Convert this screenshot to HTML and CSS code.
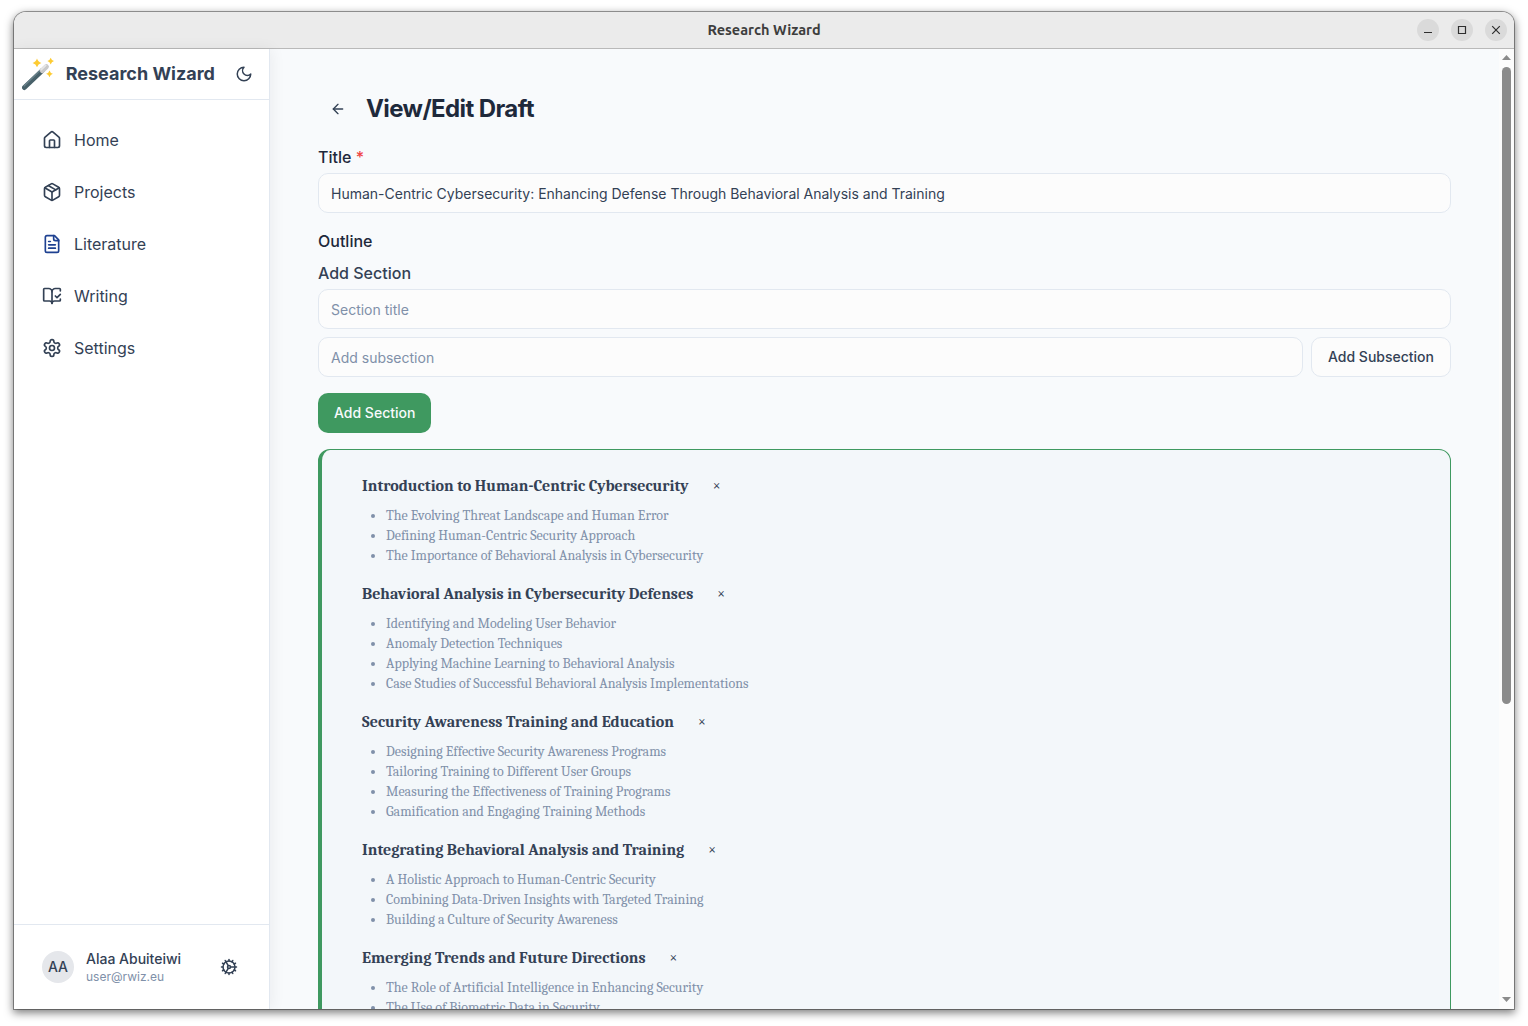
FILE: index.html
```html
<!DOCTYPE html>
<html lang="en">
<head>
<meta charset="utf-8">
<title>Research Wizard</title>
<link rel="stylesheet" href="styles.css">
</head>
<body>
<div class="window">
  <header class="titlebar">
    <span class="titlebar-name">Research Wizard</span>
    <div class="controls">
      <span class="control"><svg width="22" height="22" viewBox="0 0 22 22"><path d="M7 13.500h8"/></svg></span>
      <span class="control"><svg width="22" height="22" viewBox="0 0 22 22"><path d="M7.500 7.500h7v7h-7z"/></svg></span>
      <span class="control"><svg width="22" height="22" viewBox="0 0 22 22"><path d="M7.200 7.200l7.600 7.600M14.800 7.200l-7.600 7.600"/></svg></span>
    </div>
  </header>
  <div class="app">
    <aside class="sidebar">
      <div class="brand">
        <svg class="wand" width="34" height="34" viewBox="0 0 34 34">
          <path d="M2.400 30.600L20.600 13.200" stroke="#48616a" stroke-width="4.800" stroke-linecap="round"/>
          <path d="M1.800 29.200L19 12.600" stroke="#6b838c" stroke-width="1.200"/>
          <path d="M20.200 13.600L24.400 9.600" stroke="#c9c9c9" stroke-width="5" stroke-linecap="round"/>
          <path d="M19.200 12.600L23.600 8.400" stroke="#e6e6e6" stroke-width="2" stroke-linecap="round"/>
          <g fill="#fdcb32" transform="translate(0 .7)">
            <path d="M15 .8q1 3.500 4.400 4.400q-3.400 1-4.400 4.400q-1-3.400-4.400-4.400q3.400-.9 4.400-4.400z"/>
            <path d="M28.700 0q.8 2.700 3.300 3.400q-2.500.8-3.300 3.400q-.8-2.600-3.300-3.400q2.500-.7 3.300-3.400z"/>
            <path d="M27.500 12.700q.8 2.700 3.400 3.400q-2.600.8-3.400 3.400q-.8-2.600-3.400-3.400q2.600-.7 3.400-3.400z"/>
          </g>
        </svg>
        <span class="brand-name">Research Wizard</span>
        <svg class="icon moon" width="18" height="18" viewBox="0 0 24 24"><path d="M12 3a6 6 0 0 0 9 9 9 9 0 1 1-9-9Z"/></svg>
      </div>
      <nav class="nav">
        <a class="nav-item"><svg class="icon" width="20" height="20" viewBox="0 0 24 24"><path d="M15 21v-8a1 1 0 0 0-1-1h-4a1 1 0 0 0-1 1v8"/><path d="M3 10a2 2 0 0 1 .709-1.528l7-5.999a2 2 0 0 1 2.582 0l7 5.999A2 2 0 0 1 21 10v9a2 2 0 0 1-2 2H5a2 2 0 0 1-2-2z"/></svg>Home</a>
        <a class="nav-item"><svg class="icon" width="20" height="20" viewBox="0 0 24 24"><path d="m7.500 4.270 9 5.150"/><path d="M21 8a2 2 0 0 0-1-1.730l-7-4a2 2 0 0 0-2 0l-7 4A2 2 0 0 0 3 8v8a2 2 0 0 0 1 1.730l7 4a2 2 0 0 0 2 0l7-4A2 2 0 0 0 21 16Z"/><path d="m3.300 7 8.700 5 8.700-5"/><path d="M12 22V12"/></svg>Projects</a>
        <a class="nav-item"><svg class="icon blue" width="20" height="20" viewBox="0 0 24 24"><path d="M15 2H6a2 2 0 0 0-2 2v16a2 2 0 0 0 2 2h12a2 2 0 0 0 2-2V7Z"/><path d="M14 2v4a2 2 0 0 0 2 2h4"/><path d="M10 9H8"/><path d="M16 13H8"/><path d="M16 17H8"/></svg>Literature</a>
        <a class="nav-item"><svg class="icon" width="20" height="20" viewBox="0 0 24 24"><path d="M12 21V7"/><path d="m16 12 2 2 4-4"/><path d="M22 6V4a1 1 0 0 0-1-1h-5a4 4 0 0 0-4 4 4 4 0 0 0-4-4H3a1 1 0 0 0-1 1v13a1 1 0 0 0 1 1h6a3 3 0 0 1 3 3 3 3 0 0 1 3-3h6a1 1 0 0 0 1-1v-1.300"/></svg>Writing</a>
        <a class="nav-item"><svg class="icon" width="20" height="20" viewBox="0 0 24 24"><path d="M12.220 2h-.44a2 2 0 0 0-2 2v.18a2 2 0 0 1-1 1.730l-.43.25a2 2 0 0 1-2 0l-.15-.08a2 2 0 0 0-2.730.73l-.22.38a2 2 0 0 0 .73 2.730l.15.1a2 2 0 0 1 1 1.720v.51a2 2 0 0 1-1 1.740l-.15.09a2 2 0 0 0-.73 2.730l.22.38a2 2 0 0 0 2.730.73l.15-.08a2 2 0 0 1 2 0l.43.25a2 2 0 0 1 1 1.730V20a2 2 0 0 0 2 2h.44a2 2 0 0 0 2-2v-.18a2 2 0 0 1 1-1.730l.43-.25a2 2 0 0 1 2 0l.15.08a2 2 0 0 0 2.730-.73l.22-.39a2 2 0 0 0-.73-2.730l-.15-.08a2 2 0 0 1-1-1.740v-.5a2 2 0 0 1 1-1.740l.15-.09a2 2 0 0 0 .73-2.730l-.22-.38a2 2 0 0 0-2.730-.73l-.15.08a2 2 0 0 1-2 0l-.43-.25a2 2 0 0 1-1-1.730V4a2 2 0 0 0-2-2z"/><circle cx="12" cy="12" r="3"/></svg>Settings</a>
      </nav>
      <div class="account">
        <span class="avatar">AA</span>
        <div class="who"><span class="who-name">Alaa Abuiteiwi</span><span class="who-mail">user@rwiz.eu</span></div>
        <svg class="icon cog" width="18" height="18" viewBox="0 0 24 24"><path d="M12 20a8 8 0 1 0 0-16 8 8 0 0 0 0 16Z"/><path d="M12 14a2 2 0 1 0 0-4 2 2 0 0 0 0 4Z"/><path d="M12 2v2"/><path d="M12 22v-2"/><path d="m17 20.660-1-1.730"/><path d="M11 10.270 7 3.340"/><path d="m20.660 17-1.730-1"/><path d="m3.340 7 1.730 1"/><path d="M14 12h8"/><path d="M2 12h2"/><path d="m20.660 7-1.730 1"/><path d="m3.340 17 1.730-1"/><path d="m17 3.340-1 1.730"/><path d="m11 13.730-4 6.930"/></svg>
      </div>
    </aside>
    <main class="main">
      <div class="page-head">
        <svg class="icon" width="16" height="16" viewBox="0 0 24 24"><path d="m12 19-7-7 7-7"/><path d="M19 12H5"/></svg>
        <h1 class="page-title">View/Edit Draft</h1>
      </div>
      <div class="label strong">Title <span class="required">*</span></div>
      <div class="input filled">Human-Centric Cybersecurity: Enhancing Defense Through Behavioral Analysis and Training</div>
      <div class="label strong outline-label">Outline</div>
      <div class="label section-label">Add Section</div>
      <div class="input">Section title</div>
      <div class="sub-row">
        <div class="input grow">Add subsection</div>
        <button class="button">Add Subsection</button>
      </div>
      <button class="button primary">Add Section</button>
      <div class="outline">
        <section class="part">
          <h2 class="part-title">Introduction to Human-Centric Cybersecurity <span class="remove">×</span></h2>
          <ul class="topics"><li>The Evolving Threat Landscape and Human Error</li><li>Defining Human-Centric Security Approach</li><li>The Importance of Behavioral Analysis in Cybersecurity</li></ul>
        </section>
        <section class="part">
          <h2 class="part-title">Behavioral Analysis in Cybersecurity Defenses <span class="remove">×</span></h2>
          <ul class="topics"><li>Identifying and Modeling User Behavior</li><li>Anomaly Detection Techniques</li><li>Applying Machine Learning to Behavioral Analysis</li><li>Case Studies of Successful Behavioral Analysis Implementations</li></ul>
        </section>
        <section class="part">
          <h2 class="part-title">Security Awareness Training and Education <span class="remove">×</span></h2>
          <ul class="topics"><li>Designing Effective Security Awareness Programs</li><li>Tailoring Training to Different User Groups</li><li>Measuring the Effectiveness of Training Programs</li><li>Gamification and Engaging Training Methods</li></ul>
        </section>
        <section class="part">
          <h2 class="part-title">Integrating Behavioral Analysis and Training <span class="remove">×</span></h2>
          <ul class="topics"><li>A Holistic Approach to Human-Centric Security</li><li>Combining Data-Driven Insights with Targeted Training</li><li>Building a Culture of Security Awareness</li></ul>
        </section>
        <section class="part">
          <h2 class="part-title">Emerging Trends and Future Directions <span class="remove">×</span></h2>
          <ul class="topics"><li>The Role of Artificial Intelligence in Enhancing Security</li><li>The Use of Biometric Data in Security</li></ul>
        </section>
      </div>
    </main>
    <div class="scrollbar">
      <svg width="9" height="5" viewBox="0 0 9 5"><path d="M0 5L4.500 0L9 5z"/></svg>
      <div class="thumb"></div>
      <svg width="9" height="5" viewBox="0 0 9 5"><path d="M0 0L4.500 5L9 0z"/></svg>
    </div>
  </div>
</div>
</body>
</html>
```
FILE: styles.css
```css
* { box-sizing: border-box; }
body { margin: 0; padding: 12px 14px 17px; height: 1026px; background: #fff; font-family: Inter, sans-serif; color: #334155; overflow: hidden; }
.window { height: 997px; display: flex; flex-direction: column; border-radius: 12px 12px 0 0; box-shadow: 0 0 0 1px rgba(0,0,0,.36), 0 3px 9px 1px rgba(0,0,0,.5); overflow: hidden; background: #fff; }
.titlebar { height: 37px; flex: none; background: #ebebeb; border-bottom: 1px solid #b9b9b9; display: grid; grid-template-columns: 1fr auto 1fr; align-items: center; padding-right: 7px; padding-left: 7px; }
.titlebar-name { grid-column: 2; font: 700 14.500px/20px Ubuntu, "Noto Sans", sans-serif; color: #3d3d3d; }
.controls { display: flex; justify-content: flex-end; gap: 12px; }
.control { width: 22px; height: 22px; border-radius: 50%; background: #dadada; }
.control svg { display: block; fill: none; stroke: #2e2e2e; stroke-width: 1.2; }
.app { flex: 1; min-height: 0; display: flex; }
.icon { fill: none; stroke: #334155; stroke-width: 2; stroke-linecap: round; stroke-linejoin: round; flex: none; }
.icon.blue { stroke: #1e4191; }
.sidebar { width: 256px; flex: none; background: #fff; border-right: 1px solid #e2e8f0; display: flex; flex-direction: column; box-shadow: 2px 0 14px rgba(15,23,42,.06); z-index: 1; }
.brand { height: 51px; border-bottom: 1px solid #e2e8f0; display: flex; align-items: center; padding: 0 16px 0 8px; }
.wand { fill: none; flex: none; }
.brand-name { font-weight: 700; font-size: 18px; line-height: 28px; margin-left: 9.700px; }
.moon { margin-left: auto; }
.nav { padding: 18px 28px; display: flex; flex-direction: column; gap: 8px; flex: 1; }
.nav-item { display: flex; align-items: center; gap: 12px; height: 44px; font-size: 16px; }
.account { height: 85px; border-top: 1px solid #e2e8f0; display: flex; align-items: center; padding: 0 31px 0 28px; gap: 12px; }
.avatar { width: 32px; height: 32px; border-radius: 50%; background: #e5e7eb; display: flex; align-items: center; justify-content: center; font-weight: 500; font-size: 14px; padding-bottom: 1px; }
.who { display: flex; flex-direction: column; flex: 1; }
.who-name { font-size: 14px; line-height: 20px; font-weight: 500; }
.who-mail { font-size: 12px; line-height: 16px; color: #8090a9; }
.main { flex: 1; min-width: 0; background: #f8fafc; padding: 44px 48px 0; overflow: hidden; }
.page-head { display: flex; align-items: center; gap: 20px; height: 32px; padding-left: 12px; }
.page-title { margin: 0; font-size: 24px; line-height: 32px; font-weight: 700; letter-spacing: -.6px; color: #1e293b; }
.label { font-size: 16px; line-height: 24px; font-weight: 500; }
.label.strong { color: #1e293b; margin-top: 20px; }
.required { color: #ef4444; }
.input { height: 40px; border: 1px solid #e2e8f0; border-radius: 10px; background: #fcfcfc; padding: 0 12px; font-size: 14px; line-height: 39px; color: #8090a9; }
.label + .input { margin-top: 4px; }
.input.filled { color: #334155; }
.label.outline-label { margin-top: 16px; }
.section-label { margin-top: 8px; }
.sub-row { display: flex; gap: 8px; margin-top: 8px; }
.grow { flex: 1; }
.button { height: 40px; padding: 0 16px; border: 1px solid #e2e8f0; border-radius: 10px; background: #fcfcfc; font: 500 14px/20px Inter, sans-serif; color: #334155; }
.button.primary { display: block; margin-top: 16px; background: #3f9960; border: 0; color: #f8fafc; }
.outline { margin-top: 16px; border: 1px solid #3f9960; border-left-width: 4px; border-radius: 12px; background: #f3f7fa; padding: 24px 40px; font-family: Cambria, Caladea, "Noto Serif", "Liberation Serif", serif; }
.part { margin-bottom: 16px; }
.part-title { margin: 0; font-size: 16px; line-height: 24px; height: 24px; font-weight: 700; display: flex; }
.remove { margin-left: 24px; font-size: 14px; font-weight: 400; }
.topics { margin: 8px 0 0; padding-left: 24px; font-size: 14px; line-height: 20px; color: #8090a9; }
.scrollbar { width: 15px; flex: none; background: #fcfcfc; display: flex; flex-direction: column; align-items: center; padding: 6px 0 7px; }
.scrollbar svg { fill: #8b8b8b; display: block; flex: none; }
.thumb { width: 9px; height: 637px; margin: 7px 0 auto; border-radius: 5px; background: #8b8b8b; flex: none; }
```
